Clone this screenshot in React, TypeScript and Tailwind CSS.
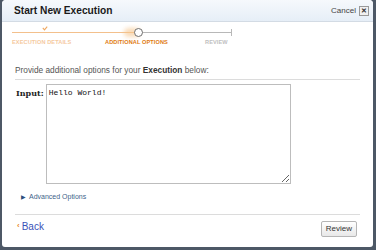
import React from "react";

export default function App() {
  return (
    <div className="w-[376px] h-[250px] bg-[#4d5866] overflow-hidden" style={{ fontFamily: "'Liberation Sans', Arial, sans-serif" }}>
      <div className="ml-[2px] w-[371px] h-[247px] bg-white rounded-b-[3px] rounded-t-[4px] flex flex-col">
        <div className="h-[22px] shrink-0 flex items-center justify-between pl-[12px] pr-[4px] bg-gradient-to-b from-[#f6f9fc] to-[#e6eef7] border-b border-[#d3dbe4] rounded-t-[4px]">
          <span className="text-[10.2px] font-bold text-[#1a1a1a]">Start New Execution</span>
          <div className="flex items-center gap-[3px]">
            <span className="text-[8px] text-[#444]">Cancel</span>
            <span className="w-[10px] h-[10px] border border-[#999] bg-[#f0f0f0] flex items-center justify-center text-[7px] leading-none text-[#333] font-bold">✕</span>
          </div>
        </div>
        <div className="relative h-[28px] shrink-0 mx-[10px]">
          <svg className="absolute top-[4px] left-[30px]" width="6" height="5" viewBox="0 0 6 5">
            <path d="M0.8 1.8 L2.5 3.8 L5.2 0.6" fill="none" stroke="#f0a860" strokeWidth="1.1" />
          </svg>
          <div className="absolute top-[10px] left-[0px] w-[124px] h-px bg-[#f3c08c]"></div>
          <div className="absolute top-[10px] left-[124px] w-[95px] h-px bg-[#b8b8b8]"></div>
          <div className="absolute top-[7px] left-[219px] w-px h-[7px] bg-[#b8b8b8]"></div>
          <div className="absolute top-[6px] left-[112px] w-[16px] h-[9px] rounded-full bg-[#f5c48a] opacity-60 blur-[2px]"></div>
          <div className="absolute top-[6px] left-[122px] w-[9px] h-[9px] rounded-full bg-white border-[1.5px] border-[#6e6e6e]"></div>
          <div className="absolute top-[18px] left-[0px] text-[5.6px] leading-none font-bold text-[#f5c9a0] tracking-[0.1px]">EXECUTION DETAILS</div>
          <div className="absolute top-[18px] left-[93px] text-[5.6px] leading-none font-bold text-[#e07a10] tracking-[0.1px]">ADDITIONAL OPTIONS</div>
          <div className="absolute top-[18px] left-[193px] text-[5.6px] leading-none font-bold text-[#c0c0c0] tracking-[0.1px]">REVIEW</div>
        </div>
        <div className="px-[13px] pt-[15px]">
          <div className="text-[8.3px] leading-[10px] text-[#555] pb-[4px] border-b border-[#dcdcdc] w-[345px]">
            Provide additional options for your <span className="font-bold text-[#333]">Execution</span> below:
          </div>
          <div className="flex mt-[4px] gap-[2px] pl-[1px]">
            <span className="text-[8px] font-bold text-[#222] pt-[3px]" style={{ fontFamily: "'DejaVu Serif', serif" }}>Input:</span>
            <textarea
              defaultValue="Hello World!"
              className="w-[245px] h-[100px] border border-[#bdbdbd] resize text-[8px] leading-[10px] text-[#111] px-[2px] py-[3px] outline-none"
              style={{ fontFamily: "'Liberation Mono', 'Courier New', monospace" }}
            />
          </div>
          <div className="flex items-center gap-[3px] mt-[8px] pl-[6px] h-[10px] text-[7px] text-[#3e5f8a]">
            <span className="text-[6px] text-[#2c4f7c]">▶</span>
            <span>Advanced Options</span>
          </div>
          <div className="mt-[12px] border-t border-[#dcdcdc] w-[345px]"></div>
          <div className="flex items-start justify-between mt-[6px] w-[345px]">
            <div className="flex items-center gap-[2px] pl-[2px] h-[10px]">
              <span className="text-[8px] font-bold text-[#e98b2a]">‹</span>
              <span className="text-[10px] text-[#3a52b8]">Back</span>
            </div>
            <button className="h-[16px] px-[4px] text-[8px] text-[#333] border border-[#b5b5b5] rounded-[2px] bg-gradient-to-b from-white to-[#e8e8e8] mr-[3px]">
              Review
            </button>
          </div>
        </div>
      </div>
    </div>
  );
}
